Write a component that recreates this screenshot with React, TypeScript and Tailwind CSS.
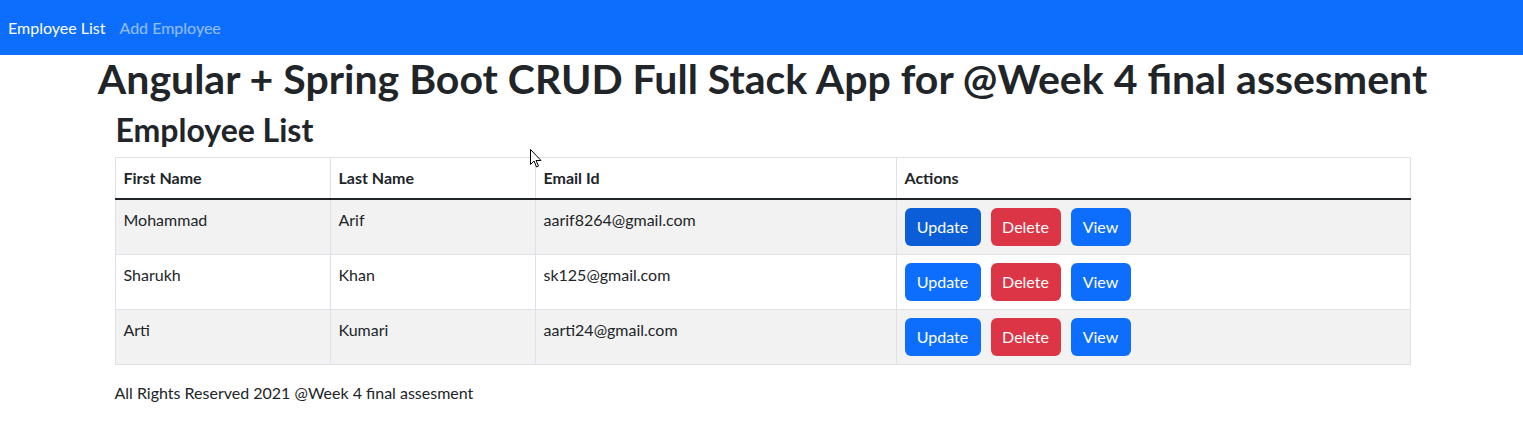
import React from "react";

const employees = [
  { id: 1, firstName: "Mohammad", lastName: "Arif", email: "aarif8264@gmail.com" },
  { id: 2, firstName: "Sharukh", lastName: "Khan", email: "sk125@gmail.com" },
  { id: 3, firstName: "Arti", lastName: "Kumari", email: "aarti24@gmail.com" },
];

export default function App() {
  return (
    <div
      className="relative min-h-screen bg-white text-[#212529] overflow-hidden"
      style={{ fontFamily: "Lato, 'Noto Sans', sans-serif" }}
    >
      {/* Navbar */}
      <nav className="h-[55px] bg-[#0d6efd] flex items-center px-2 text-base">
        <a className="text-white mr-[14px]">Employee List</a>
        <a className="text-white/55">Add Employee</a>
      </nav>

      <div className="w-[1320px] mx-auto pl-[13px] pr-[11px]">
        <div className="flex justify-center mb-2">
          <h1 className="whitespace-nowrap text-[41px] leading-[48px] font-bold">
            Angular + Spring Boot CRUD Full Stack App for @Week 4 final assesment
          </h1>
        </div>
        <h2 className="text-[32px] leading-[38px] font-bold mb-2 pl-[1px]">Employee List</h2>

        <table className="w-full border-collapse border border-[#dee2e6] mb-4 text-base">
          <thead>
            <tr className="border-b-2 border-b-[#212529]">
              <th className="w-[215px] text-left font-bold p-2 border-r border-[#dee2e6]">First Name</th>
              <th className="w-[205px] text-left font-bold p-2 border-r border-[#dee2e6]">Last Name</th>
              <th className="w-[361px] text-left font-bold p-2 border-r border-[#dee2e6]">Email Id</th>
              <th className="text-left font-bold p-2">Actions</th>
            </tr>
          </thead>
          <tbody>
            {employees.map((e, i) => (
              <tr
                key={e.id}
                className={`${i % 2 === 0 ? "bg-[#f2f2f2]" : "bg-white"} border-b border-[#dee2e6]`}
              >
                <td className="p-2 align-top border-r border-[#dee2e6]">{e.firstName}</td>
                <td className="p-2 align-top border-r border-[#dee2e6]">{e.lastName}</td>
                <td className="p-2 align-top border-r border-[#dee2e6]">{e.email}</td>
                <td className="p-2 align-top">
                  <div className="flex gap-[10px]">
                    <button
                      className={`${i === 0 ? "bg-[#0b5ed7]" : "bg-[#0d6efd]"} text-white h-[38px] w-[76px] rounded-md`}
                    >
                      Update
                    </button>
                    <button className="bg-[#dc3545] text-white h-[38px] w-[70px] rounded-md">Delete</button>
                    <button className="bg-[#0d6efd] text-white h-[38px] w-[60px] rounded-md">View</button>
                  </div>
                </td>
              </tr>
            ))}
          </tbody>
        </table>

        <footer className="text-base leading-6">All Rights Reserved 2021 @Week 4 final assesment</footer>
      </div>

      {/* mouse pointer */}
      <svg className="absolute left-[530px] top-[149px]" width="12" height="19" viewBox="0 0 12 19">
        <path d="M0.5 0.5 L0.5 15.5 L4 12 L6.5 18 L8.5 17 L6 11.5 L11 11.5 Z" fill="white" stroke="black" strokeWidth="1" />
      </svg>
    </div>
  );
}
